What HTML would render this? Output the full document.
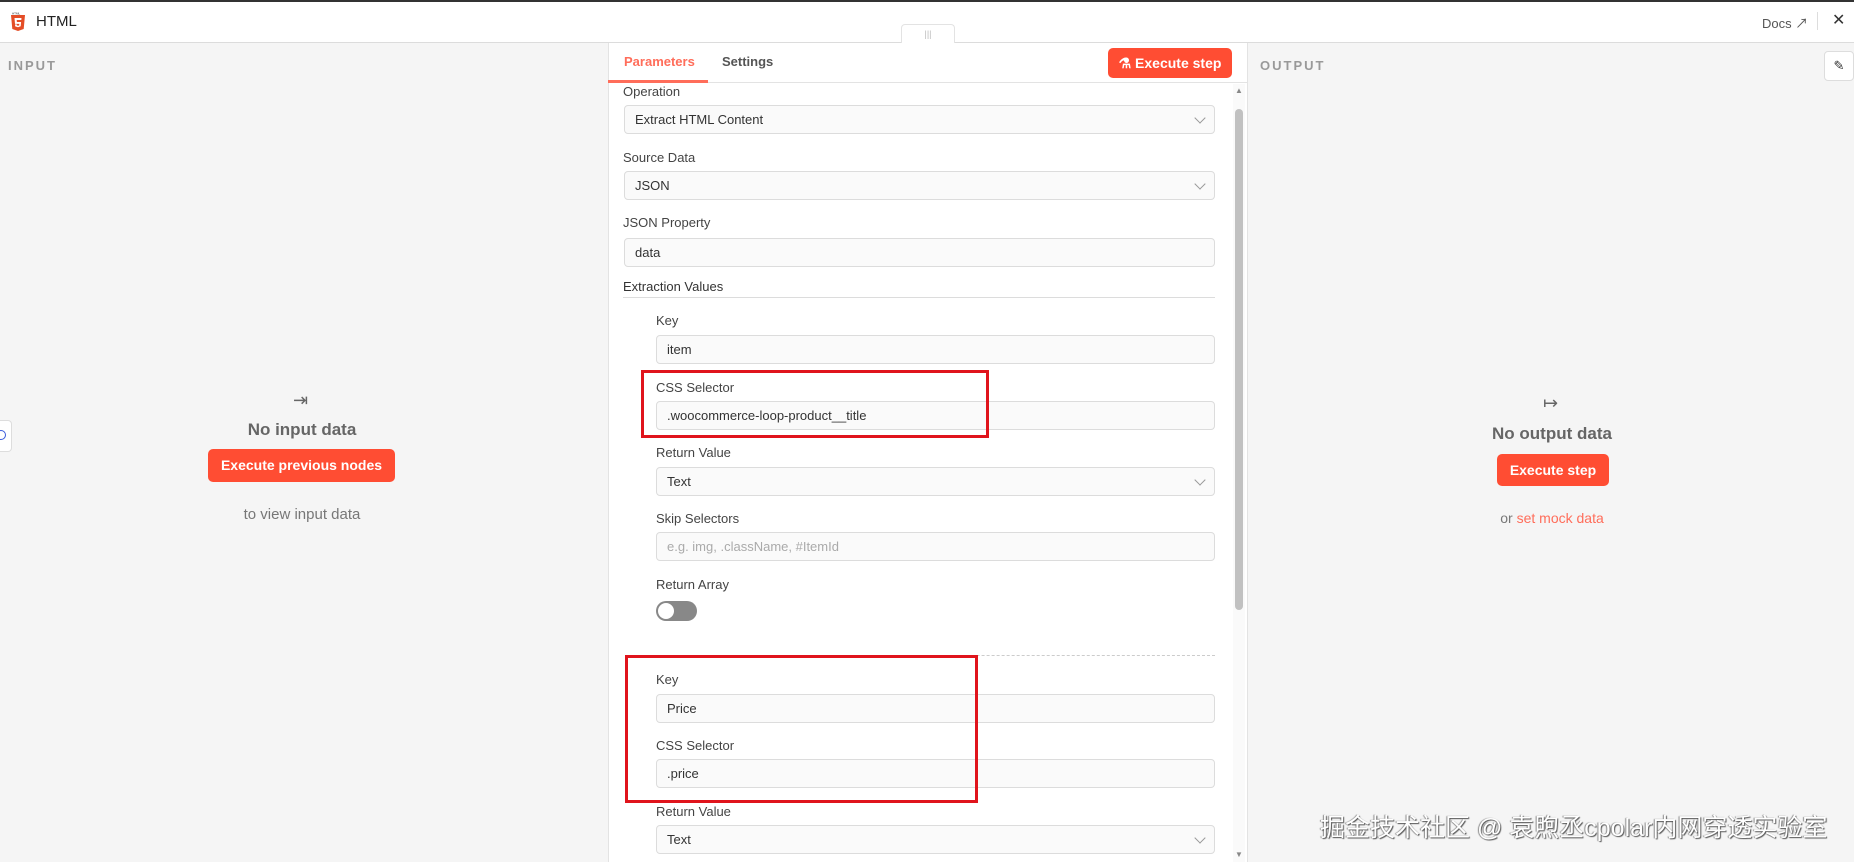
<!DOCTYPE html>
<html><head><meta charset="utf-8"><style>
*{box-sizing:border-box;margin:0;padding:0}
body{width:1854px;height:862px;overflow:hidden;background:#f5f5f5;font-family:"Liberation Sans","Noto Sans CJK SC",sans-serif;color:#333;position:relative}
.a{position:absolute}
.hdr{left:0;top:0;width:1854px;height:43px;background:#fff;border-top:2px solid #333;border-bottom:1px solid #dcdcdc}
.lbl{position:absolute;font-size:13px;color:#444}
.inp{position:absolute;height:29px;background:#fafafa;border:1px solid #dcdcdc;border-radius:4px;font-size:13px;color:#333;padding-left:10px;line-height:27px}
.chev{position:absolute;right:10px;top:8px;width:8px;height:8px;border-right:1.3px solid #999;border-bottom:1.3px solid #999;transform:rotate(45deg)}
.btn{position:absolute;background:#ff4d33;color:#fff;border-radius:5px;font-weight:bold;font-size:14px;text-align:center}
.red{position:absolute;border:3px solid #e0141c}
</style></head><body>
<div class="a hdr"></div>
<svg class="a" style="left:10px;top:12px" width="16" height="20" viewBox="0 0 16 20"><path d="M1 3h14l-1.3 14L8 19l-5.7-2z" fill="#e44d26"/><path d="M4.5 6h7l-.2 2H6.7l.2 2h4.2l-.4 4.3L8 15.3l-2.8-.9-.2-2h1.8l.1 1 1.1.4 1.2-.4.1-1.5H5z" fill="#fff"/><text x="2" y="2.5" font-size="3" fill="#333" font-family="Liberation Sans">HTML</text></svg>
<div class="a" style="left:36px;top:13px;font-size:15px;color:#222">HTML</div>
<div class="a" style="left:1762px;top:13px;font-size:13px;color:#555">Docs &#8599;</div>
<div class="a" style="left:1817px;top:12px;width:1px;height:18px;background:#ddd"></div>
<div class="a" style="left:1832px;top:10px;font-size:16px;color:#333">✕</div>
<div class="a" style="left:901px;top:24px;width:54px;height:20px;background:#fff;border:1px solid #e3e3e3;border-bottom:none;border-radius:4px 4px 0 0;text-align:center;font-size:9px;color:#bbb;line-height:18px">|||</div>

<div class="a" style="left:8px;top:58px;font-size:13px;letter-spacing:2px;color:#999;font-weight:bold">INPUT</div>
<div class="a" style="left:1260px;top:58px;font-size:13px;letter-spacing:2px;color:#999;font-weight:bold">OUTPUT</div>
<div class="a" style="left:1824px;top:51px;width:30px;height:30px;background:#fff;border:1px solid #ddd;border-radius:4px;text-align:center;line-height:28px;font-size:13px">✎</div>
<div class="a" style="left:0;top:420px;width:12px;height:32px;background:#fff;border:1px solid #ddd;border-left:none;border-radius:0 4px 4px 0"></div>
<div class="a" style="left:-4px;top:430px;width:10px;height:10px;border:1.5px solid #3b5bdb;border-radius:50%"></div>

<div class="a" style="left:293px;top:390px;font-size:18px;color:#666">⇥</div>
<div class="a" style="left:0;top:420px;width:604px;text-align:center;font-size:17px;font-weight:bold;color:#666">No input data</div>
<div class="btn" style="left:208px;top:449px;width:187px;height:33px;line-height:33px">Execute previous nodes</div>
<div class="a" style="left:0;top:506px;width:604px;text-align:center;font-size:15px;color:#777">to view input data</div>

<div class="a" style="left:1543px;top:393px;font-size:18px;color:#666">↦</div>
<div class="a" style="left:1250px;top:424px;width:604px;text-align:center;font-size:17px;font-weight:bold;color:#666">No output data</div>
<div class="btn" style="left:1497px;top:454px;width:112px;height:32px;line-height:32px">Execute step</div>
<div class="a" style="left:1250px;top:510px;width:604px;text-align:center;font-size:14px;color:#777">or <span style="color:#ff6d5a">set mock data</span></div>

<div class="a" style="left:608px;top:43px;width:640px;height:819px;background:#fff;border-left:1px solid #e3e3e3;border-right:1px solid #e3e3e3"></div>
<div class="a" style="left:609px;top:82px;width:638px;height:1px;background:#e3e3e3"></div>
<div class="a" style="left:624px;top:54px;font-size:13px;font-weight:bold;color:#ff6d5a">Parameters</div>
<div class="a" style="left:608px;top:80px;width:100px;height:3px;background:#ff6d5a"></div>
<div class="a" style="left:722px;top:54px;font-size:13px;color:#555;font-weight:600">Settings</div>
<div class="btn" style="left:1108px;top:48px;width:124px;height:30px;line-height:30px;font-size:14px">⚗ Execute step</div>
<div class="a" style="left:1233px;top:84px;width:12px;height:778px;background:#fafafa"></div>
<div class="a" style="left:1235px;top:109px;width:8px;height:501px;background:#c1c1c1;border-radius:4px"></div>
<div class="a" style="left:1235px;top:86px;font-size:8px;color:#888">▲</div>
<div class="a" style="left:1235px;top:850px;font-size:8px;color:#888">▼</div>

<div class="lbl" style="left:623px;top:84px">Operation</div>
<div class="inp" style="left:624px;top:105px;width:591px">Extract HTML Content<span class="chev"></span></div>
<div class="lbl" style="left:623px;top:150px">Source Data</div>
<div class="inp" style="left:624px;top:171px;width:591px">JSON<span class="chev"></span></div>
<div class="lbl" style="left:623px;top:215px">JSON Property</div>
<div class="inp" style="left:624px;top:238px;width:591px">data</div>
<div class="lbl" style="left:623px;top:279px;color:#333">Extraction Values</div>
<div class="a" style="left:623px;top:297px;width:592px;height:1px;background:#dcdcdc"></div>

<div class="lbl" style="left:656px;top:313px">Key</div>
<div class="inp" style="left:656px;top:335px;width:559px">item</div>
<div class="lbl" style="left:656px;top:380px">CSS Selector</div>
<div class="inp" style="left:656px;top:401px;width:559px">.woocommerce-loop-product__title</div>
<div class="lbl" style="left:656px;top:445px">Return Value</div>
<div class="inp" style="left:656px;top:467px;width:559px">Text<span class="chev"></span></div>
<div class="lbl" style="left:656px;top:511px">Skip Selectors</div>
<div class="inp" style="left:656px;top:532px;width:559px;color:#aaa">e.g. img, .className, #ItemId</div>
<div class="lbl" style="left:656px;top:577px">Return Array</div>
<div class="a" style="left:656px;top:601px;width:41px;height:20px;background:#888;border-radius:10px"></div>
<div class="a" style="left:658px;top:603px;width:16px;height:16px;background:#fff;border-radius:50%"></div>
<div class="red" style="left:641px;top:370px;width:348px;height:68px"></div>

<div class="a" style="left:656px;top:655px;width:559px;border-top:1px dashed #ccc"></div>
<div class="lbl" style="left:656px;top:672px">Key</div>
<div class="inp" style="left:656px;top:694px;width:559px">Price</div>
<div class="lbl" style="left:656px;top:738px">CSS Selector</div>
<div class="inp" style="left:656px;top:759px;width:559px">.price</div>
<div class="lbl" style="left:656px;top:804px">Return Value</div>
<div class="inp" style="left:656px;top:825px;width:559px">Text<span class="chev"></span></div>
<div class="red" style="left:625px;top:655px;width:353px;height:148px"></div>

<div class="a" style="left:1320px;top:808px;font-size:25px;color:#fff;text-shadow:1px 1px 1px #555,-1px 0 1px #888;white-space:nowrap;font-family:'Liberation Sans','Noto Sans CJK SC',sans-serif">掘金技术社区 @ 袁煦丞cpolar内网穿透实验室</div>
</body></html>
